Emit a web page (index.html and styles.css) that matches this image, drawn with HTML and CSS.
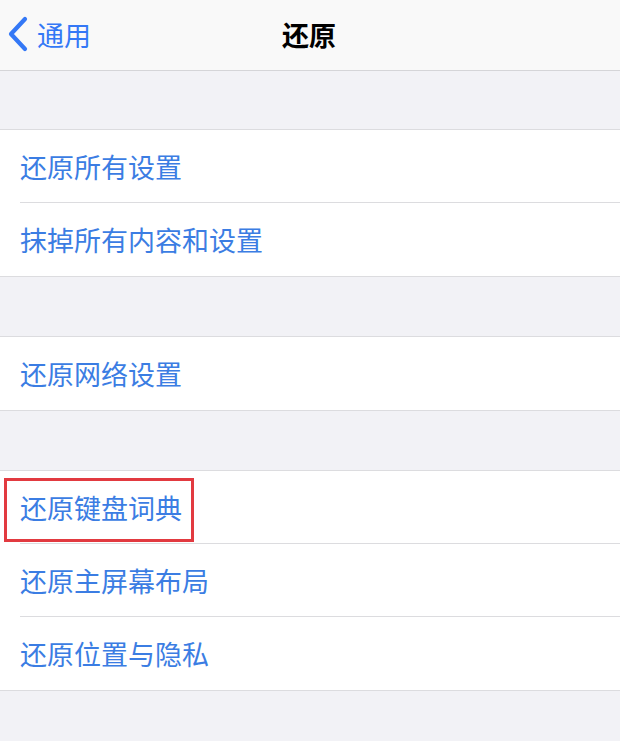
FILE: index.html
```html
<!DOCTYPE html>
<html lang="zh-CN">
<head>
<meta charset="utf-8">
<title>还原</title>
<link rel="stylesheet" href="styles.css">
</head>
<body>
<div class="screen">
  <header class="navbar">
    <div class="back">
      <svg class="chevron" width="22" height="36" viewBox="0 0 22 36">
        <path d="M18 3 L4 18 L18 33" fill="none" stroke="#3478f6" stroke-width="4.2" stroke-linecap="round" stroke-linejoin="round"/>
      </svg>
      <span class="back-label">通用</span>
    </div>
    <div class="title">还原</div>
  </header>

  <section class="group first">
    <div class="row">还原所有设置</div>
    <div class="row">抹掉所有内容和设置</div>
  </section>

  <section class="group">
    <div class="row">还原网络设置</div>
  </section>

  <section class="group">
    <div class="row highlighted"><span class="row-text">还原键盘词典</span><span class="mark"></span></div>
    <div class="row">还原主屏幕布局</div>
    <div class="row">还原位置与隐私</div>
  </section>
</div>
</body>
</html>
```

FILE: styles.css
```css
* { box-sizing: border-box; }
html, body {
  margin: 0;
  padding: 0;
  background: #f2f2f6;
}
body {
  font-family: "Noto Sans CJK SC", "Noto Sans", sans-serif;
  width: 620px;
  height: 741px;
  overflow: hidden;
}
.screen {
  display: flex;
  flex-direction: column;
}
.navbar {
  position: relative;
  height: 71px;
  background: #f9f9f9;
  border-bottom: 1px solid #d5d5d8;
  display: flex;
  align-items: center;
  justify-content: center;
}
.back {
  position: absolute;
  left: 7px;
  top: 0;
  height: 70px;
  display: flex;
  align-items: center;
  gap: 8px;
}
.chevron { display: block; margin-top: -2px; }
.back-label {
  color: #3478f6;
  font-size: 27px;
  line-height: 1;
  margin-top: -2px;
}
.title {
  font-size: 27px;
  font-weight: 600;
  color: #000;
  line-height: 1;
  margin-top: -2px;
  margin-left: -2px;
}
.group {
  margin-top: 59px;
  background: #fff;
  border-top: 1px solid #dcdcdf;
  border-bottom: 1px solid #dcdcdf;
}
.group.first { margin-top: 58px; }
.row {
  position: relative;
  height: 73px;
  padding-left: 20px;
  display: flex;
  align-items: center;
  font-size: 27px;
  color: #3b7de3;
  line-height: 1;
}
.row + .row::before {
  content: "";
  position: absolute;
  left: 20px;
  right: 0;
  top: -1px;
  height: 1px;
  background: #dcdcdf;
}
.row-text { position: relative; }
.mark {
  position: absolute;
  left: 4px;
  top: 7px;
  width: 190px;
  height: 64px;
  border: 3px solid #e23a40;
}
```
